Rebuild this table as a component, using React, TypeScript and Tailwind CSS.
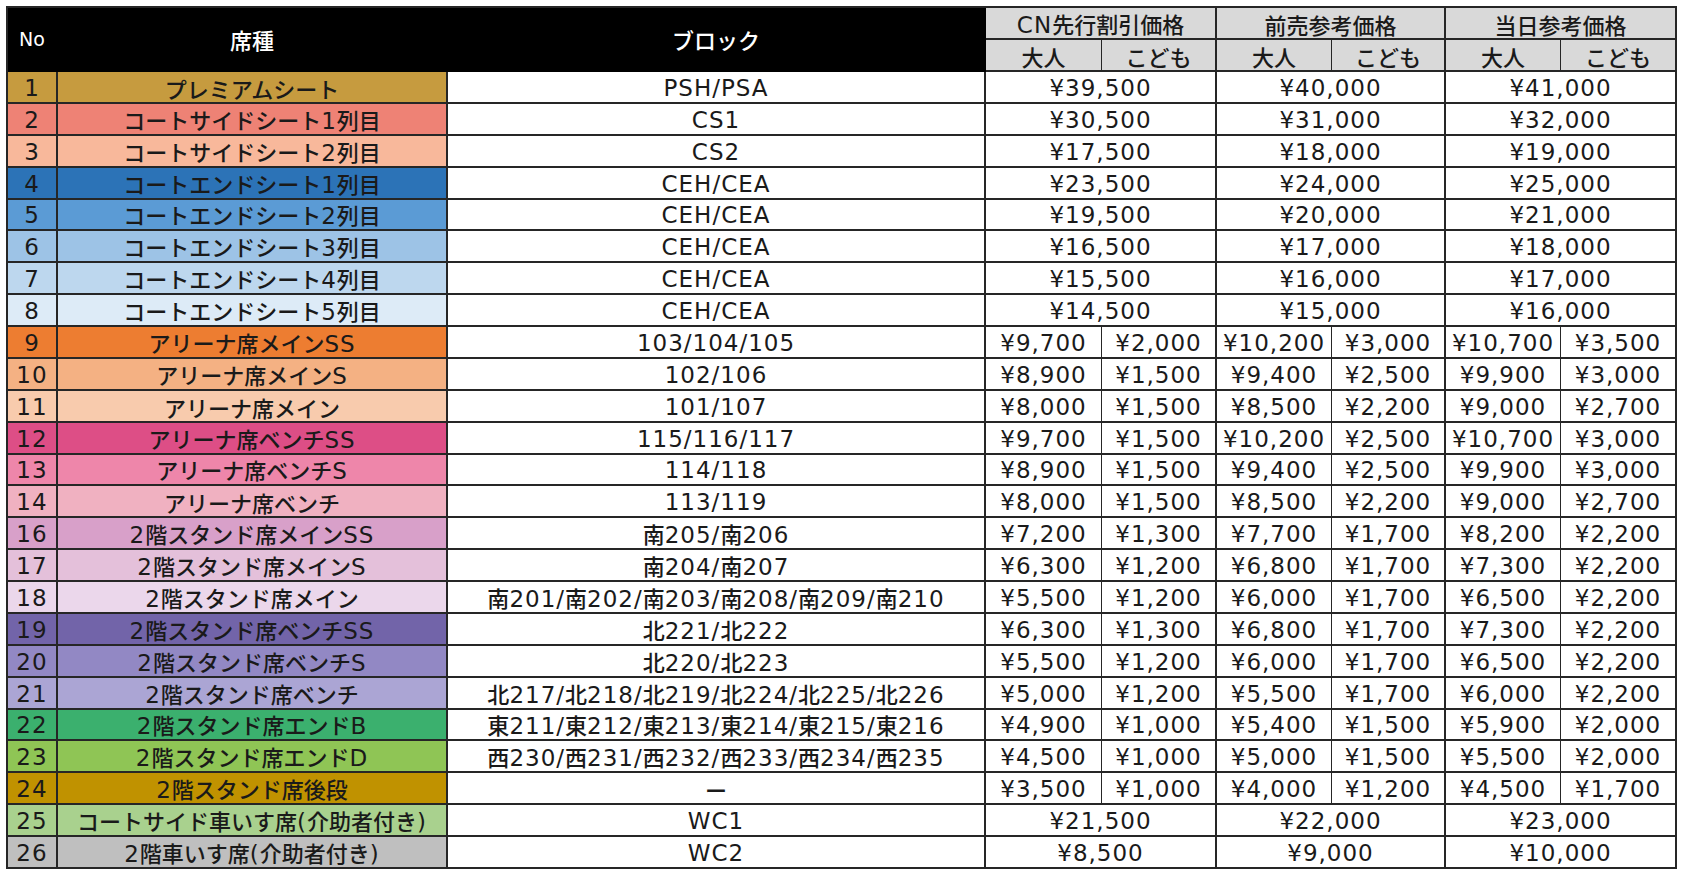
import React from "react";

type Row = { no: number; name: string; block: string; bg: string; p: string[] };

const rows: Row[] = [
  { no: 1, name: "プレミアムシート", block: "PSH/PSA", bg: "bg-[#C69B3F]", p: ["¥39,500", "¥40,000", "¥41,000"] },
  { no: 2, name: "コートサイドシート1列目", block: "CS1", bg: "bg-[#EE8275]", p: ["¥30,500", "¥31,000", "¥32,000"] },
  { no: 3, name: "コートサイドシート2列目", block: "CS2", bg: "bg-[#F8B89B]", p: ["¥17,500", "¥18,000", "¥19,000"] },
  { no: 4, name: "コートエンドシート1列目", block: "CEH/CEA", bg: "bg-[#2C73B7]", p: ["¥23,500", "¥24,000", "¥25,000"] },
  { no: 5, name: "コートエンドシート2列目", block: "CEH/CEA", bg: "bg-[#5B9BD5]", p: ["¥19,500", "¥20,000", "¥21,000"] },
  { no: 6, name: "コートエンドシート3列目", block: "CEH/CEA", bg: "bg-[#9DC3E6]", p: ["¥16,500", "¥17,000", "¥18,000"] },
  { no: 7, name: "コートエンドシート4列目", block: "CEH/CEA", bg: "bg-[#BDD7EE]", p: ["¥15,500", "¥16,000", "¥17,000"] },
  { no: 8, name: "コートエンドシート5列目", block: "CEH/CEA", bg: "bg-[#DDEBF7]", p: ["¥14,500", "¥15,000", "¥16,000"] },
  { no: 9, name: "アリーナ席メインSS", block: "103/104/105", bg: "bg-[#ED7D31]", p: ["¥9,700", "¥2,000", "¥10,200", "¥3,000", "¥10,700", "¥3,500"] },
  { no: 10, name: "アリーナ席メインS", block: "102/106", bg: "bg-[#F4B183]", p: ["¥8,900", "¥1,500", "¥9,400", "¥2,500", "¥9,900", "¥3,000"] },
  { no: 11, name: "アリーナ席メイン", block: "101/107", bg: "bg-[#F8CBAD]", p: ["¥8,000", "¥1,500", "¥8,500", "¥2,200", "¥9,000", "¥2,700"] },
  { no: 12, name: "アリーナ席ベンチSS", block: "115/116/117", bg: "bg-[#DD4E86]", p: ["¥9,700", "¥1,500", "¥10,200", "¥2,500", "¥10,700", "¥3,000"] },
  { no: 13, name: "アリーナ席ベンチS", block: "114/118", bg: "bg-[#EE86AA]", p: ["¥8,900", "¥1,500", "¥9,400", "¥2,500", "¥9,900", "¥3,000"] },
  { no: 14, name: "アリーナ席ベンチ", block: "113/119", bg: "bg-[#F0B1C1]", p: ["¥8,000", "¥1,500", "¥8,500", "¥2,200", "¥9,000", "¥2,700"] },
  { no: 16, name: "2階スタンド席メインSS", block: "南205/南206", bg: "bg-[#D8A0C9]", p: ["¥7,200", "¥1,300", "¥7,700", "¥1,700", "¥8,200", "¥2,200"] },
  { no: 17, name: "2階スタンド席メインS", block: "南204/南207", bg: "bg-[#E4C0DA]", p: ["¥6,300", "¥1,200", "¥6,800", "¥1,700", "¥7,300", "¥2,200"] },
  { no: 18, name: "2階スタンド席メイン", block: "南201/南202/南203/南208/南209/南210", bg: "bg-[#EBD7EB]", p: ["¥5,500", "¥1,200", "¥6,000", "¥1,700", "¥6,500", "¥2,200"] },
  { no: 19, name: "2階スタンド席ベンチSS", block: "北221/北222", bg: "bg-[#7264A9]", p: ["¥6,300", "¥1,300", "¥6,800", "¥1,700", "¥7,300", "¥2,200"] },
  { no: 20, name: "2階スタンド席ベンチS", block: "北220/北223", bg: "bg-[#9288C4]", p: ["¥5,500", "¥1,200", "¥6,000", "¥1,700", "¥6,500", "¥2,200"] },
  { no: 21, name: "2階スタンド席ベンチ", block: "北217/北218/北219/北224/北225/北226", bg: "bg-[#ABA5D4]", p: ["¥5,000", "¥1,200", "¥5,500", "¥1,700", "¥6,000", "¥2,200"] },
  { no: 22, name: "2階スタンド席エンドB", block: "東211/東212/東213/東214/東215/東216", bg: "bg-[#3BB06E]", p: ["¥4,900", "¥1,000", "¥5,400", "¥1,500", "¥5,900", "¥2,000"] },
  { no: 23, name: "2階スタンド席エンドD", block: "西230/西231/西232/西233/西234/西235", bg: "bg-[#8FC555]", p: ["¥4,500", "¥1,000", "¥5,000", "¥1,500", "¥5,500", "¥2,000"] },
  { no: 24, name: "2階スタンド席後段", block: "ー", bg: "bg-[#C09200]", p: ["¥3,500", "¥1,000", "¥4,000", "¥1,200", "¥4,500", "¥1,700"] },
  { no: 25, name: "コートサイド車いす席(介助者付き)", block: "WC1", bg: "bg-[#A9D18E]", p: ["¥21,500", "¥22,000", "¥23,000"] },
  { no: 26, name: "2階車いす席(介助者付き)", block: "WC2", bg: "bg-[#BFBFBF]", p: ["¥8,500", "¥9,000", "¥10,000"] },
];

const isLatin = (s: string) => /^[\x20-\x7E\u00A5]+$/.test(s);

function Txt({ s }: { s: string }) {
  const parts = s.split(/([\x20-\x7E\u00A5]+)/).filter(Boolean);
  return (
    <span className="whitespace-nowrap leading-none">
      {parts.map((p, i) =>
        isLatin(p) ? (
          <span key={i} className="font-['DejaVu_Sans',sans-serif] text-[23px] tracking-[1px]">
            {p}
          </span>
        ) : (
          <span key={i} className="font-['Noto_Sans_CJK_JP',sans-serif] font-medium text-[22px]">
            {p}
          </span>
        )
      )}
    </span>
  );
}

const cellBase = "flex items-center justify-center pt-[3px] text-[#1a1a1a] border-b-2 border-[#262626]";

export default function App() {
  return (
    <div className="min-h-screen bg-white pt-[6px] pl-[6px]">
      <div className="grid w-[1671px] grid-cols-[50px_390px_538px_116px_115px_115px_114px_115px_116px] grid-rows-[32px_32px_repeat(25,31.88px)] border-t-2 border-l-2 border-[#262626]">
        {/* header */}
        <div className="row-span-2 flex items-center justify-center bg-black text-white border-b-2 border-r-2 border-black">
          <span className="font-['DejaVu_Sans',sans-serif] text-[19px] leading-none">No</span>
        </div>
        <div className="row-span-2 flex items-center justify-center bg-black text-white border-b-2 border-r-2 border-black">
          <span className="font-['Noto_Sans_CJK_JP',sans-serif] font-medium text-[22px] leading-none">席種</span>
        </div>
        <div className="row-span-2 flex items-center justify-center bg-black text-white border-b-2 border-r-2 border-black">
          <span className="font-['Noto_Sans_CJK_JP',sans-serif] font-medium text-[22px] leading-none">ブロック</span>
        </div>
        <div className={"col-span-2 bg-[#D9D9D9] border-r-2 " + cellBase}>
          <Txt s="CN先行割引価格" />
        </div>
        <div className={"col-span-2 bg-[#D9D9D9] border-r-2 " + cellBase}>
          <Txt s="前売参考価格" />
        </div>
        <div className={"col-span-2 bg-[#D9D9D9] border-r-2 " + cellBase}>
          <Txt s="当日参考価格" />
        </div>
        {[0, 1, 2].map((g) => (
          <React.Fragment key={g}>
            <div className={"bg-[#D9D9D9] border-r " + cellBase}>
              <Txt s="大人" />
            </div>
            <div className={"bg-[#D9D9D9] border-r-2 " + cellBase}>
              <Txt s="こども" />
            </div>
          </React.Fragment>
        ))}

        {/* body */}
        {rows.map((r) => (
          <React.Fragment key={r.no}>
            <div className={r.bg + " border-r-2 " + cellBase}>
              <Txt s={String(r.no)} />
            </div>
            <div className={r.bg + " border-r-2 " + cellBase}>
              <Txt s={r.name} />
            </div>
            <div className={"bg-white border-r-2 " + cellBase}>
              <Txt s={r.block} />
            </div>
            {r.p.length === 3
              ? r.p.map((v, i) => (
                  <div key={i} className={"col-span-2 bg-white border-r-2 " + cellBase}>
                    <Txt s={v} />
                  </div>
                ))
              : r.p.map((v, i) => (
                  <div
                    key={i}
                    className={(i % 2 === 0 ? "border-r " : "border-r-2 ") + "bg-white " + cellBase}
                  >
                    <Txt s={v} />
                  </div>
                ))}
          </React.Fragment>
        ))}
      </div>
    </div>
  );
}
